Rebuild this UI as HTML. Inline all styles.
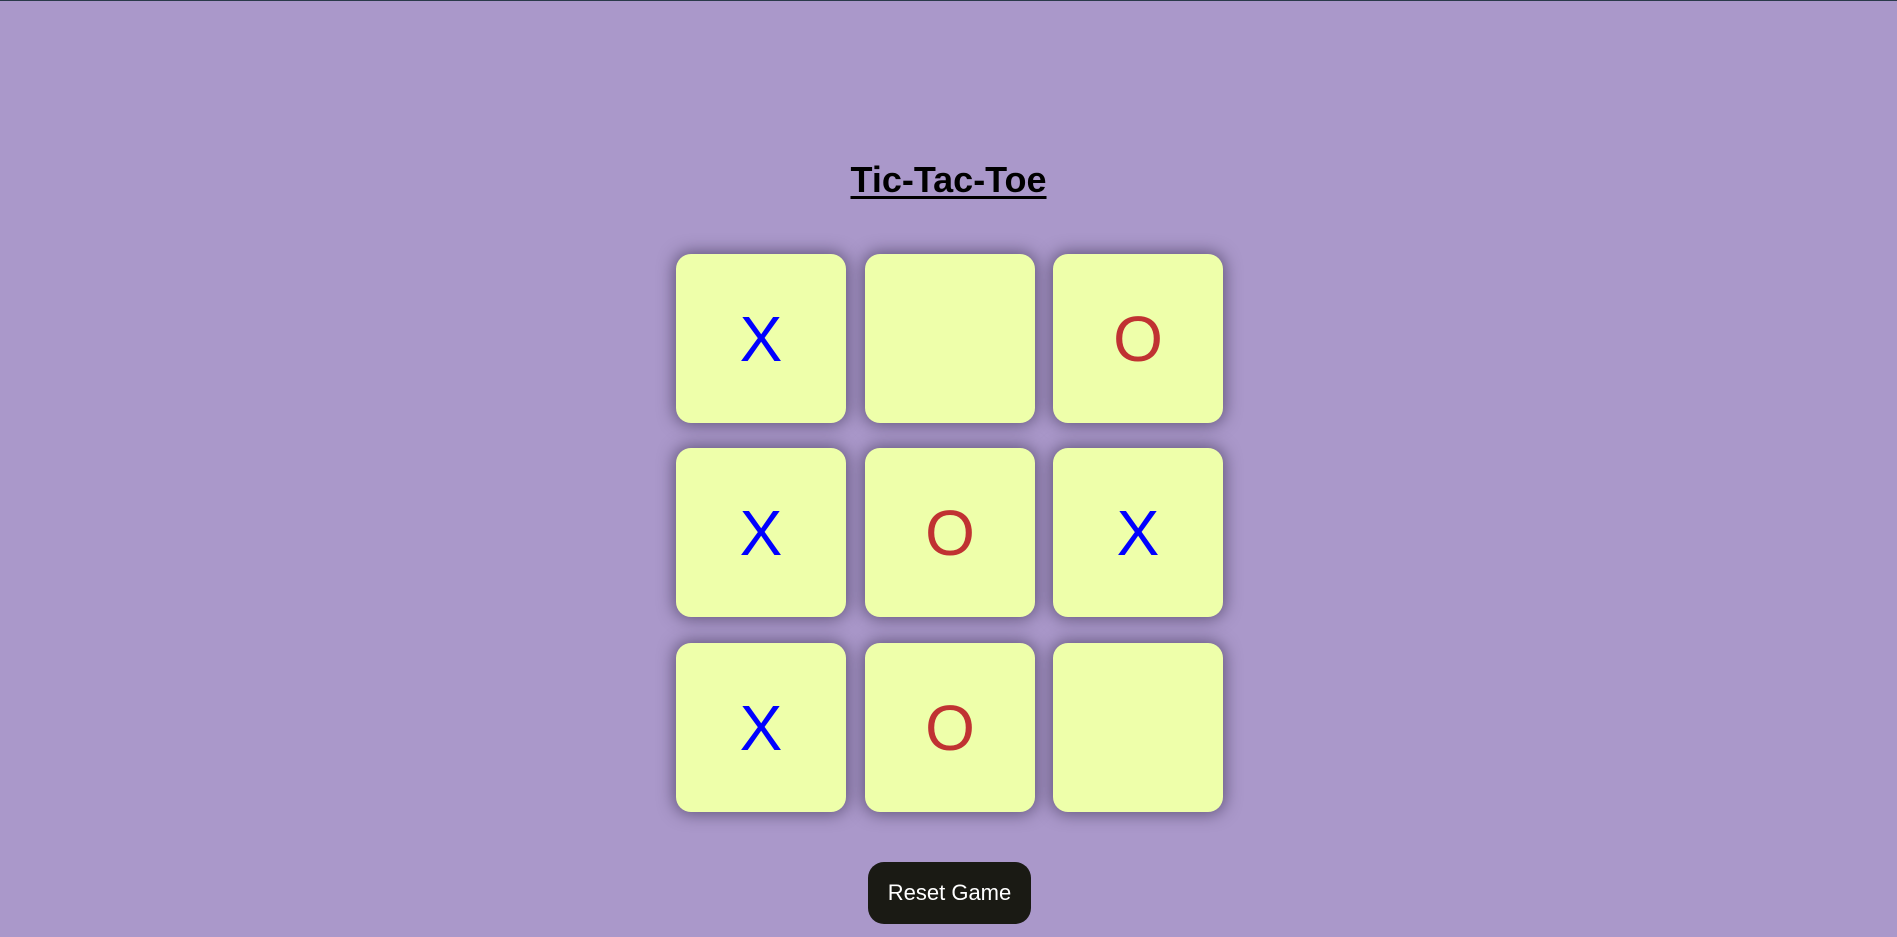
<!DOCTYPE html>
<html><head><meta charset="utf-8"><style>
html,body{margin:0;padding:0;}
body{width:1897px;height:937px;background:#aa98ca;border-top:1px solid #2a3a4a;box-sizing:border-box;position:relative;overflow:hidden;font-family:"Liberation Sans",Arial,sans-serif;}
h1{position:absolute;left:0;right:0;top:158px;margin:0;text-align:center;font-size:36px;font-weight:bold;text-decoration:underline;text-decoration-thickness:3px;text-underline-offset:4px;color:#000;}
.cell{position:absolute;width:170px;height:169px;background:#eeffaa;border-radius:15px;box-shadow:0 0 16px 2px rgba(50,40,70,0.6);display:flex;align-items:center;justify-content:center;font-size:64px;line-height:1;}
.x{color:#0000ff}.o{color:#c03232}
.btn{position:absolute;left:868px;top:861px;width:163px;height:62px;background:#1a1a14;border-radius:16px;color:#fff;font-size:22px;display:flex;align-items:center;justify-content:center;}
</style></head><body>
<h1>Tic-Tac-Toe</h1>
<div class="cell x" style="left:676px;top:253px">X</div>
<div class="cell" style="left:865px;top:253px"></div>
<div class="cell o" style="left:1053px;top:253px">O</div>
<div class="cell x" style="left:676px;top:447px">X</div>
<div class="cell o" style="left:865px;top:447px">O</div>
<div class="cell x" style="left:1053px;top:447px">X</div>
<div class="cell x" style="left:676px;top:642px">X</div>
<div class="cell o" style="left:865px;top:642px">O</div>
<div class="cell" style="left:1053px;top:642px"></div>
<div class="btn">Reset Game</div>
</body></html>
